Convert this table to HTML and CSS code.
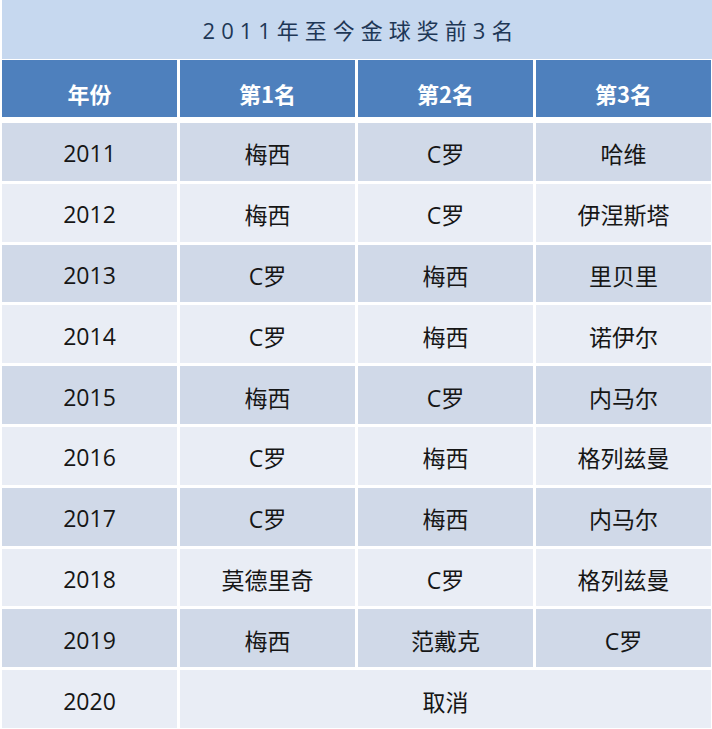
FILE: index.html
```html
<!DOCTYPE html>
<html lang="zh-CN">
<head>
<meta charset="utf-8">
<title>2011年至今金球奖前3名</title>
<link rel="stylesheet" href="styles.css">
</head>
<body>
<div class="page">
  <div class="title">2011年至今金球奖前3名</div>
  <div class="grid head">
    <div class="cell">年份</div>
    <div class="cell">第1名</div>
    <div class="cell">第2名</div>
    <div class="cell">第3名</div>
  </div>
  <div class="body">
    <div class="grid row odd"><div class="cell">2011</div><div class="cell">梅西</div><div class="cell">C罗</div><div class="cell">哈维</div></div>
    <div class="grid row even"><div class="cell">2012</div><div class="cell">梅西</div><div class="cell">C罗</div><div class="cell">伊涅斯塔</div></div>
    <div class="grid row odd"><div class="cell">2013</div><div class="cell">C罗</div><div class="cell">梅西</div><div class="cell">里贝里</div></div>
    <div class="grid row even"><div class="cell">2014</div><div class="cell">C罗</div><div class="cell">梅西</div><div class="cell">诺伊尔</div></div>
    <div class="grid row odd"><div class="cell">2015</div><div class="cell">梅西</div><div class="cell">C罗</div><div class="cell">内马尔</div></div>
    <div class="grid row even"><div class="cell">2016</div><div class="cell">C罗</div><div class="cell">梅西</div><div class="cell">格列兹曼</div></div>
    <div class="grid row odd"><div class="cell">2017</div><div class="cell">C罗</div><div class="cell">梅西</div><div class="cell">内马尔</div></div>
    <div class="grid row even"><div class="cell">2018</div><div class="cell">莫德里奇</div><div class="cell">C罗</div><div class="cell">格列兹曼</div></div>
    <div class="grid row odd"><div class="cell">2019</div><div class="cell">梅西</div><div class="cell">范戴克</div><div class="cell">C罗</div></div>
    <div class="grid row even last"><div class="cell">2020</div><div class="cell span">取消</div></div>
  </div>
</div>
</body>
</html>
```
FILE: styles.css
```css
html, body {
  margin: 0;
  padding: 0;
  background: #ffffff;
}
.page {
  width: 712px;
  height: 729px;
  overflow: hidden;
  font-family: "Open Sans", "Noto Sans CJK SC", sans-serif;
  background: #ffffff;
}
.title {
  height: 59px;
  margin-left: 2px;
  background: #c6d8ef;
  color: #1e3756;
  font-size: 22px;
  letter-spacing: 6px;
  display: flex;
  align-items: center;
  justify-content: center;
  padding-left: 8px;
  padding-bottom: 2px;
  box-sizing: border-box;
}
.grid {
  display: grid;
  grid-template-columns: 175px 175px 175px 175px;
  column-gap: 3px;
  padding-left: 2px;
}
.head {
  margin-top: 1px;
  height: 57px;
}
.head .cell {
  background: #4e80bd;
  color: #ffffff;
  font-family: "Noto Sans CJK SC", sans-serif;
  font-weight: bold;
  font-size: 22px;
  padding-top: 9px;
  box-sizing: border-box;
}
.body {
  margin-top: 6px;
  display: flex;
  flex-direction: column;
  row-gap: 3px;
}
.row {
  height: 57.8px;
}
.cell {
  display: flex;
  align-items: center;
  justify-content: center;
  font-size: 23px;
  color: #161616;
  padding-top: 3px;
  box-sizing: border-box;
}
.odd .cell {
  background: #d0d9e8;
}
.even .cell {
  background: #e9edf5;
}
.span {
  grid-column: 2 / 5;
}
```
